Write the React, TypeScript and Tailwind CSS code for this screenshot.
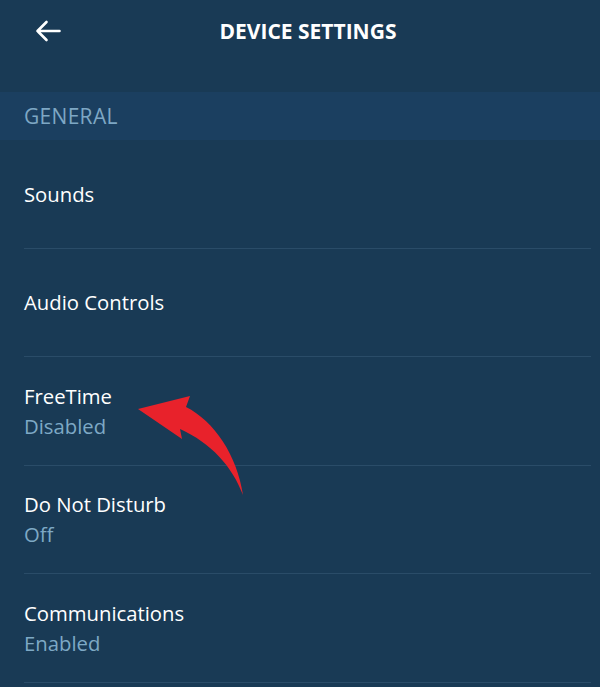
import React from "react";

const rows: { title: string; sub?: string }[] = [
  { title: "Sounds" },
  { title: "Audio Controls" },
  { title: "FreeTime", sub: "Disabled" },
  { title: "Do Not Disturb", sub: "Off" },
  { title: "Communications", sub: "Enabled" },
];

export default function App() {
  return (
    <div
      className="relative w-[600px] h-[687px] overflow-hidden bg-[#193a55]"
      style={{ fontFamily: '"Open Sans", "Noto Sans", sans-serif' }}
    >
      <header className="h-[92px] relative">
        <div className="h-[63px] flex items-center justify-center pl-[16px]">
          <h1 className="text-white font-bold text-[21px]">DEVICE SETTINGS</h1>
        </div>
        <div className="absolute left-[35px] top-[20px]">
          <svg width="26" height="22" viewBox="0 0 26 22" fill="none">
            <path d="M24.5 11H2.5M11.5 2L2.5 11L11.5 20" stroke="white" strokeWidth="2.6" strokeLinecap="round" strokeLinejoin="round" />
          </svg>
        </div>
      </header>
      <div className="h-[48px] bg-[#1b3f60] flex items-center px-[24px]">
        <span className="text-[#7ea7c4] text-[21px] font-medium leading-none tracking-[0.3px]">GENERAL</span>
      </div>
      <div className="pl-[24px] pr-[9px]">
        {rows.map((r) => (
          <div key={r.title} className="h-[108.5px] border-b border-[#2a4c68] flex flex-col justify-center">
            <div className="text-white text-[20.3px] leading-[30px]">{r.title}</div>
            {r.sub && <div className="text-[#7ea9c5] text-[20.3px] leading-[30px]">{r.sub}</div>}
          </div>
        ))}
      </div>
      <svg className="absolute left-0 top-0" width="600" height="687" viewBox="0 0 600 687">
        <path
          d="M138,409 L190,396 L186,407 C214,421 237,455 243,495 C232,466 211,443 180,429 L182,439 Z"
          fill="#e8222b"
        />
      </svg>
    </div>
  );
}
